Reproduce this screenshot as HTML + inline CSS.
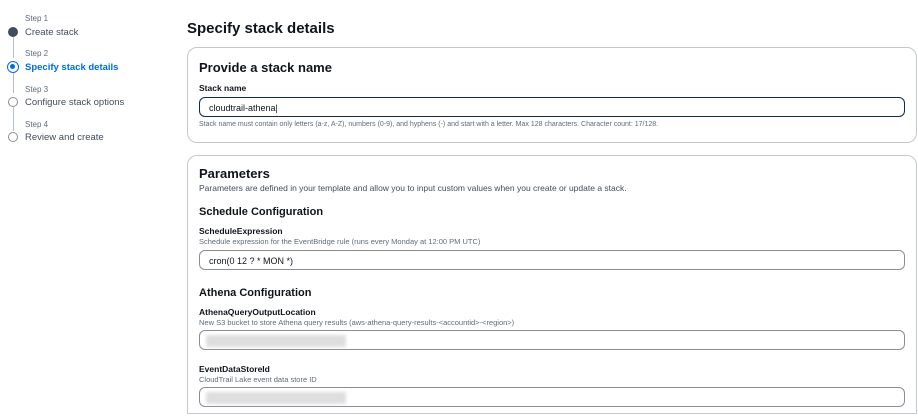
<!DOCTYPE html>
<html><head><meta charset="utf-8"><style>
*{margin:0;padding:0;box-sizing:border-box}
html,body{width:918px;height:418px;overflow:hidden}
body{background:#fff;font-family:"Liberation Sans",sans-serif;color:#0f141a;position:relative}
.a{position:absolute;white-space:nowrap}
.sl{font-size:8px;color:#5f6b7a}
.st{font-size:9.5px;color:#414d5c}
.dot{position:absolute;left:8px;width:10px;height:10px;border-radius:50%;border:1px solid #8c8c94;background:#fff}
.vl{position:absolute;left:12.5px;width:1px;background:#b6bec9}
.card{position:absolute;left:187px;width:730px;border:1px solid #c6c6cd;border-radius:10px;background:#fff}
.h2{font-size:13px;font-weight:bold}
.lb{font-size:8.5px;font-weight:bold}
.ds{font-size:7.5px;color:#5f6b7a}
.in{position:absolute;left:199px;width:706px;height:20px;border:1px solid #8c8c94;border-radius:6px;font-size:9px;padding:5px 9px}
.blur{position:absolute;left:6px;top:4px;width:140px;height:12px;background:#dedede;filter:blur(1.5px)}
</style></head><body>
<div class="vl" style="top:36px;height:22px"></div>
<div class="vl" style="top:73px;height:20px"></div>
<div class="vl" style="top:107px;height:24px"></div>
<div class="dot" style="top:27px;background:#414d5c;border-color:#414d5c"></div>
<div class="dot" style="top:61px;width:12px;height:12px;left:7px;border:1.5px solid #006ce0"><div style="position:absolute;left:2px;top:2px;width:5px;height:5px;border-radius:50%;background:#006ce0"></div></div>
<div class="dot" style="top:97px"></div>
<div class="dot" style="top:132px"></div>
<div class="a sl" style="left:25px;top:14px">Step 1</div>
<div class="a st" style="left:25px;top:27px">Create stack</div>
<div class="a sl" style="left:25px;top:49px">Step 2</div>
<div class="a st" style="left:25px;top:62px;color:#006ce0;font-weight:bold">Specify stack details</div>
<div class="a sl" style="left:25px;top:85px">Step 3</div>
<div class="a st" style="left:25px;top:97px">Configure stack options</div>
<div class="a sl" style="left:25px;top:120px">Step 4</div>
<div class="a st" style="left:25px;top:132px">Review and create</div>

<div class="a" style="left:187px;top:20px;font-size:15px;font-weight:bold">Specify stack details</div>

<div class="card" style="top:47px;height:96px"></div>
<div class="a h2" style="left:199px;top:60px">Provide a stack name</div>
<div class="a lb" style="left:199px;top:83px">Stack name</div>
<div class="in" style="top:97px;border:1.5px solid #0f2a4a">cloudtrail-athena|</div>
<div class="a ds" style="left:199px;top:121px;font-size:7px">Stack name must contain only letters (a-z, A-Z), numbers (0-9), and hyphens (-) and start with a letter. Max 128 characters. Character count: 17/128.</div>

<div class="card" style="top:155px;height:259px;border-radius:10px 10px 0 0"></div>
<div class="a h2" style="left:199px;top:166px">Parameters</div>
<div class="a" style="left:199px;top:183px;font-size:8.5px;color:#414d5c">Parameters are defined in your template and allow you to input custom values when you create or update a stack.</div>
<div class="a" style="left:199px;top:206px;font-size:11px;font-weight:bold">Schedule Configuration</div>
<div class="a lb" style="left:199px;top:226px">ScheduleExpression</div>
<div class="a ds" style="left:199px;top:237px">Schedule expression for the EventBridge rule (runs every Monday at 12:00 PM UTC)</div>
<div class="in" style="top:250px">cron(0 12 ? * MON *)</div>
<div class="a" style="left:199px;top:287px;font-size:11px;font-weight:bold">Athena Configuration</div>
<div class="a lb" style="left:199px;top:307px">AthenaQueryOutputLocation</div>
<div class="a ds" style="left:199px;top:318px">New S3 bucket to store Athena query results (aws-athena-query-results-&lt;accountid&gt;-&lt;region&gt;)</div>
<div class="in" style="top:330px"><div class="blur"></div></div>
<div class="a lb" style="left:199px;top:364px">EventDataStoreId</div>
<div class="a ds" style="left:199px;top:375px">CloudTrail Lake event data store ID</div>
<div class="in" style="top:387px"><div class="blur"></div></div>
</body></html>
